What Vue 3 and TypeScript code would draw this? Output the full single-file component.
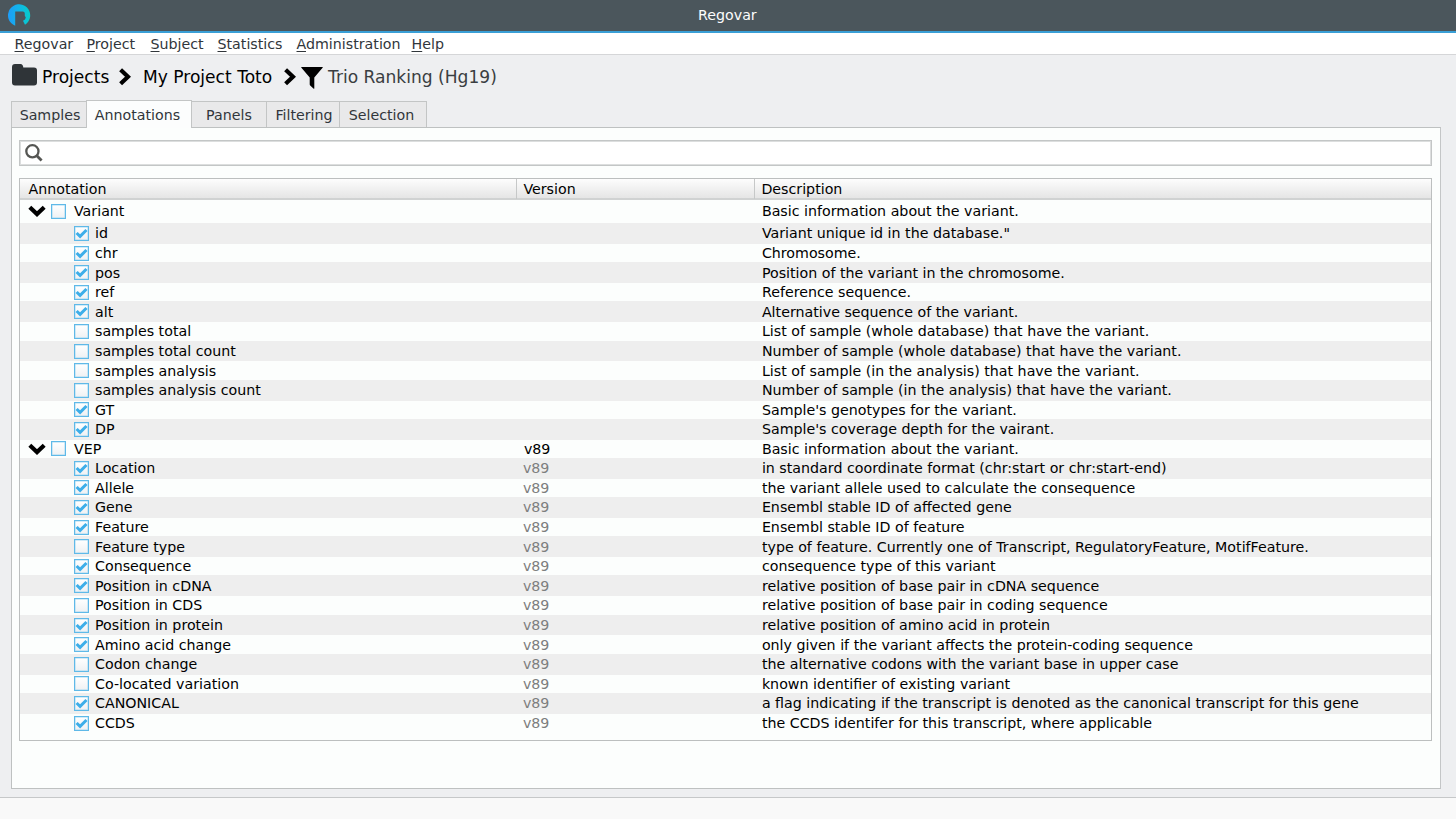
<script setup lang="ts">
interface Row {
  name: string
  description: string
  checked: boolean
}
interface Group {
  name: string
  version: string
  description: string
  rows: Row[]
}

const row = (name: string, checked: boolean, description: string): Row => ({ name, checked, description })

const menus: string[] = ['Regovar', 'Project', 'Subject', 'Statistics', 'Administration', 'Help']
const tabs: string[] = ['Samples', 'Annotations', 'Panels', 'Filtering', 'Selection']
const activeTab = 'Annotations'

const groups: Group[] = [
  {
    name: 'Variant',
    version: '',
    description: 'Basic information about the variant.',
    rows: [
      row('id', true, 'Variant unique id in the database."'),
      row('chr', true, 'Chromosome.'),
      row('pos', true, 'Position of the variant in the chromosome.'),
      row('ref', true, 'Reference sequence.'),
      row('alt', true, 'Alternative sequence of the variant.'),
      row('samples total', false, 'List of sample (whole database) that have the variant.'),
      row('samples total count', false, 'Number of sample (whole database) that have the variant.'),
      row('samples analysis', false, 'List of sample (in the analysis) that have the variant.'),
      row('samples analysis count', false, 'Number of sample (in the analysis) that have the variant.'),
      row('GT', true, "Sample's genotypes for the variant."),
      row('DP', true, "Sample's coverage depth for the vairant."),
    ],
  },
  {
    name: 'VEP',
    version: 'v89',
    description: 'Basic information about the variant.',
    rows: [
      row('Location', true, 'in standard coordinate format (chr:start or chr:start-end)'),
      row('Allele', true, 'the variant allele used to calculate the consequence'),
      row('Gene', true, 'Ensembl stable ID of affected gene'),
      row('Feature', true, 'Ensembl stable ID of feature'),
      row('Feature type', false, 'type of feature. Currently one of Transcript, RegulatoryFeature, MotifFeature.'),
      row('Consequence', true, 'consequence type of this variant'),
      row('Position in cDNA', true, 'relative position of base pair in cDNA sequence'),
      row('Position in CDS', false, 'relative position of base pair in coding sequence'),
      row('Position in protein', true, 'relative position of amino acid in protein'),
      row('Amino acid change', true, 'only given if the variant affects the protein-coding sequence'),
      row('Codon change', false, 'the alternative codons with the variant base in upper case'),
      row('Co-located variation', false, 'known identifier of existing variant'),
      row('CANONICAL', true, 'a flag indicating if the transcript is denoted as the canonical transcript for this gene'),
      row('CCDS', true, 'the CCDS identifer for this transcript, where applicable'),
    ],
  },
]
</script>

<template>
  <div class="window">
    <header class="titlebar">
      <svg class="logo" viewBox="0 0 24 24">
        <defs>
          <linearGradient id="logoFill" x1="0" x2="1" y1="0" y2="0">
            <stop offset="0" stop-color="#1e9cf8" />
            <stop offset="0.45" stop-color="#12b3ea" />
            <stop offset="1" stop-color="#06cdc9" />
          </linearGradient>
        </defs>
        <path
          fill="url(#logoFill)"
          d="M7.2 22.8A11.1 11.1 0 1 1 17 21.8L15 17.8Q17.6 16.8 17.8 14.6L16.8 12.8V10.6Q16.8 8.4 14.8 8.4H7.2Z"
        />
      </svg>
      <span class="title">Regovar</span>
    </header>

    <nav class="menubar">
      <span v-for="m in menus" :key="m" class="menu" :class="`m-${m.toLowerCase()}`"><span class="key">{{ m[0] }}</span>{{ m.slice(1) }}</span>
    </nav>

    <div class="breadcrumb">
      <svg class="folder" viewBox="0 0 25 22">
        <path fill="#2f3438" d="M3 0H8.5Q11 0 11.3 3.6H22Q25 3.6 25 6.6V18.4Q25 21.4 22 21.4H3Q0 21.4 0 18.4V3Q0 0 3 0Z" />
      </svg>
      <span class="crumb projects">Projects</span>
      <svg class="chevron first" viewBox="0 0 12 18"><path d="M1.6 1.8 9 8.8 1.6 15.8" /></svg>
      <span class="crumb project">My Project Toto</span>
      <svg class="chevron second" viewBox="0 0 12 18"><path d="M1.6 1.8 9 8.8 1.6 15.8" /></svg>
      <svg class="funnel" viewBox="0 0 22 22"><path d="M.4 0H21.6Q22 0 21.6 .8L13.3 10.4V21.2Q13.3 22.2 12.4 21.6L9.2 18.4Q8.7 17.9 8.7 17.2V10.4L.4 .8Q0 0 .4 0Z" /></svg>
      <span class="crumb current">Trio Ranking (Hg19)</span>
    </div>

    <div class="tabs">
      <div v-for="t in tabs" :key="t" class="tab" :class="[t.toLowerCase(), { active: t === activeTab }]">{{ t }}</div>
    </div>

    <main class="panel">
      <div class="search">
        <svg viewBox="0 0 18 18"><circle cx="7.4" cy="7.3" r="6.1" /><path d="M11.8 11.7 16.6 16.5" /></svg>
      </div>

      <div class="table">
        <div class="grid head">
          <div class="cell">Annotation</div>
          <div class="cell">Version</div>
          <div class="cell">Description</div>
        </div>
        <template v-for="g in groups" :key="g.name">
          <div class="grid line group" :class="g.name.toLowerCase()">
            <div class="name">
              <svg class="arrow" viewBox="0 0 18 12"><path d="M1.8 2.2 9 9 16.2 2.2" /></svg>
              <span class="box"></span>
              <span>{{ g.name }}</span>
            </div>
            <div class="version">{{ g.version }}</div>
            <div class="desc">{{ g.description }}</div>
          </div>
          <div v-for="r in g.rows" :key="r.name" class="grid line item">
            <div class="name">
              <span class="box">
                <svg v-if="r.checked" viewBox="0 0 15 15"><path d="M2.6 7 6.1 10.4 12.5 4" /></svg>
              </span>
              <span>{{ r.name }}</span>
            </div>
            <div class="version">{{ g.version }}</div>
            <div class="desc">{{ r.description }}</div>
          </div>
        </template>
      </div>
    </main>

    <footer class="statusbar"></footer>
  </div>
</template>

<style>
body {
  margin: 0;
  overflow: hidden;
}
</style>

<style scoped>
.window {
  width: 1456px;
  height: 819px;
  box-sizing: border-box;
  display: flex;
  flex-direction: column;
  background: #eeeff1;
  font-family: "DejaVu Sans", sans-serif;
  font-size: 14.22px;
  line-height: 18px;
  color: #000;
  white-space: nowrap;
}
svg { display: block; flex: none; }

.titlebar {
  height: 33px;
  flex: none;
  box-sizing: border-box;
  display: flex;
  align-items: center;
  background: #4b565c;
  border-bottom: 2px solid #3a9fd6;
}
.logo { width: 24px; height: 24px; margin-left: 8px; margin-bottom: 1px; }
.title { margin-left: 666px; color: #fcfcfc; padding-bottom: 2px; }

.menubar {
  height: 22px;
  flex: none;
  box-sizing: border-box;
  display: flex;
  align-items: center;
  padding-left: 14.5px;
  background: #fff;
  border-bottom: 1px solid #d5d6d8;
  color: #31363b;
}
.menu { flex: none; }
.m-regovar { width: 72px; }
.m-project { width: 64px; }
.m-subject { width: 67px; }
.m-statistics { width: 79px; }
.m-administration { width: 115px; }
.key { text-decoration: underline; text-underline-offset: 2px; text-decoration-thickness: 1px; }

.breadcrumb {
  height: 46px;
  flex: none;
  display: flex;
  align-items: center;
  padding-left: 11.5px;
  font-size: 17.08px;
  line-height: 22px;
}
.folder { width: 25px; height: 22px; margin-bottom: 7px; }
.crumb { flex: none; margin-bottom: 2px; }
.projects { width: 76.5px; margin-left: 5.5px; }
.chevron { width: 12px; height: 18px; margin-bottom: 3px; }
.chevron path, .arrow path { fill: none; stroke: #000; stroke-width: 4.2; }
.project { width: 140px; margin-left: 12.5px; }
.second { margin-left: .5px; }
.funnel { width: 22px; height: 22px; margin-left: 5.5px; }
.current { margin-left: 5px; color: #3a3e42; }

.tabs {
  height: 26px;
  flex: none;
  display: flex;
  align-items: flex-end;
  padding-left: 11px;
  color: #31363b;
}
.tab {
  height: 26px;
  box-sizing: border-box;
  text-align: center;
  line-height: 27px;
  background: #e9e9ea;
  border-top: 1px solid #c3c5c5;
  border-right: 1px solid #c3c5c5;
}
.samples { width: 75px; border-left: 1px solid #c3c5c5; border-right: 0; padding-left: 2px; }
.annotations { width: 106px; }
.panels { width: 75px; }
.filtering { width: 73px; padding-left: 2px; }
.selection { width: 87px; padding-right: 3px; }
.tab.active {
  height: 28px;
  line-height: 29px;
  margin-bottom: -1px;
  padding-right: 3px;
  position: relative;
  background: #fcfdfd;
  border-left: 1px solid #c3c5c5;
}

.panel {
  height: 662px;
  flex: none;
  box-sizing: border-box;
  margin: 0 15px 0 11px;
  padding: 12px 8px 0 7px;
  background: #fcfefd;
  border: 1px solid #bec1c1;
  border-right-color: #c4c6c7;
}
.search {
  height: 26px;
  box-sizing: border-box;
  display: flex;
  align-items: center;
  padding-left: 5px;
  background: #fff;
  border: 1px solid #c3c6c6;
  box-shadow: inset 0 0 0 1px #dcdede;
}
.search svg { width: 18px; height: 18px; fill: none; stroke: #555653; stroke-width: 2.3; }
.search path { stroke-width: 2.8; }

.table {
  height: 563px;
  box-sizing: border-box;
  margin-top: 12px;
  border: 1px solid #bcbfbf;
}
.grid { display: grid; grid-template-columns: 496.4px 238px 1fr; }
.head {
  height: 21px;
  box-sizing: border-box;
  background: linear-gradient(#fdfdfd, #e5e5e5);
  border-bottom: 2px solid #d0d2d2;
}
.head .cell { padding-left: 6px; line-height: 20px; border-left: 1px solid #c6c8c8; }
.head .cell:first-child { padding-left: 8.5px; border-left: 0; }
.line { height: 18.4px; align-items: center; }
.line.variant { height: 22.1px; padding-bottom: 1px; }
.line.vep { height: 17.2px; padding-bottom: .9px; }
.item:nth-child(2n + 3) { background: #eee; }
.item:nth-child(2n + 3) { height: 20.8px; }
.name { display: flex; align-items: center; }
.item .name { padding-left: 54px; }
.group .name { padding-left: 7.5px; }
.arrow { width: 18px; height: 12px; margin-right: 5px; }
.group .name .box { margin-right: 8.5px; }
.box {
  width: 15px;
  height: 15px;
  flex: none;
  box-sizing: border-box;
  margin-right: 6px;
  border: 1px solid #5fb9e8;
  box-shadow: inset 0 0 0 .5px #a5d8f2;
  background: linear-gradient(#fff, #eff1f3);
}
.box svg { width: 15px; height: 15px; margin: -1px; }
.box path { fill: none; stroke: #3daee9; stroke-width: 3; }
.version { padding-left: 6.5px; color: #7e7f7f; }
.group .version { padding-left: 7.5px; color: #000; }
.desc { padding-left: 7.5px; }

.statusbar {
  flex: 1;
  margin-top: 8px;
  background: #f9f9f9;
  border-top: 1px solid #c6c8c9;
}
</style>
